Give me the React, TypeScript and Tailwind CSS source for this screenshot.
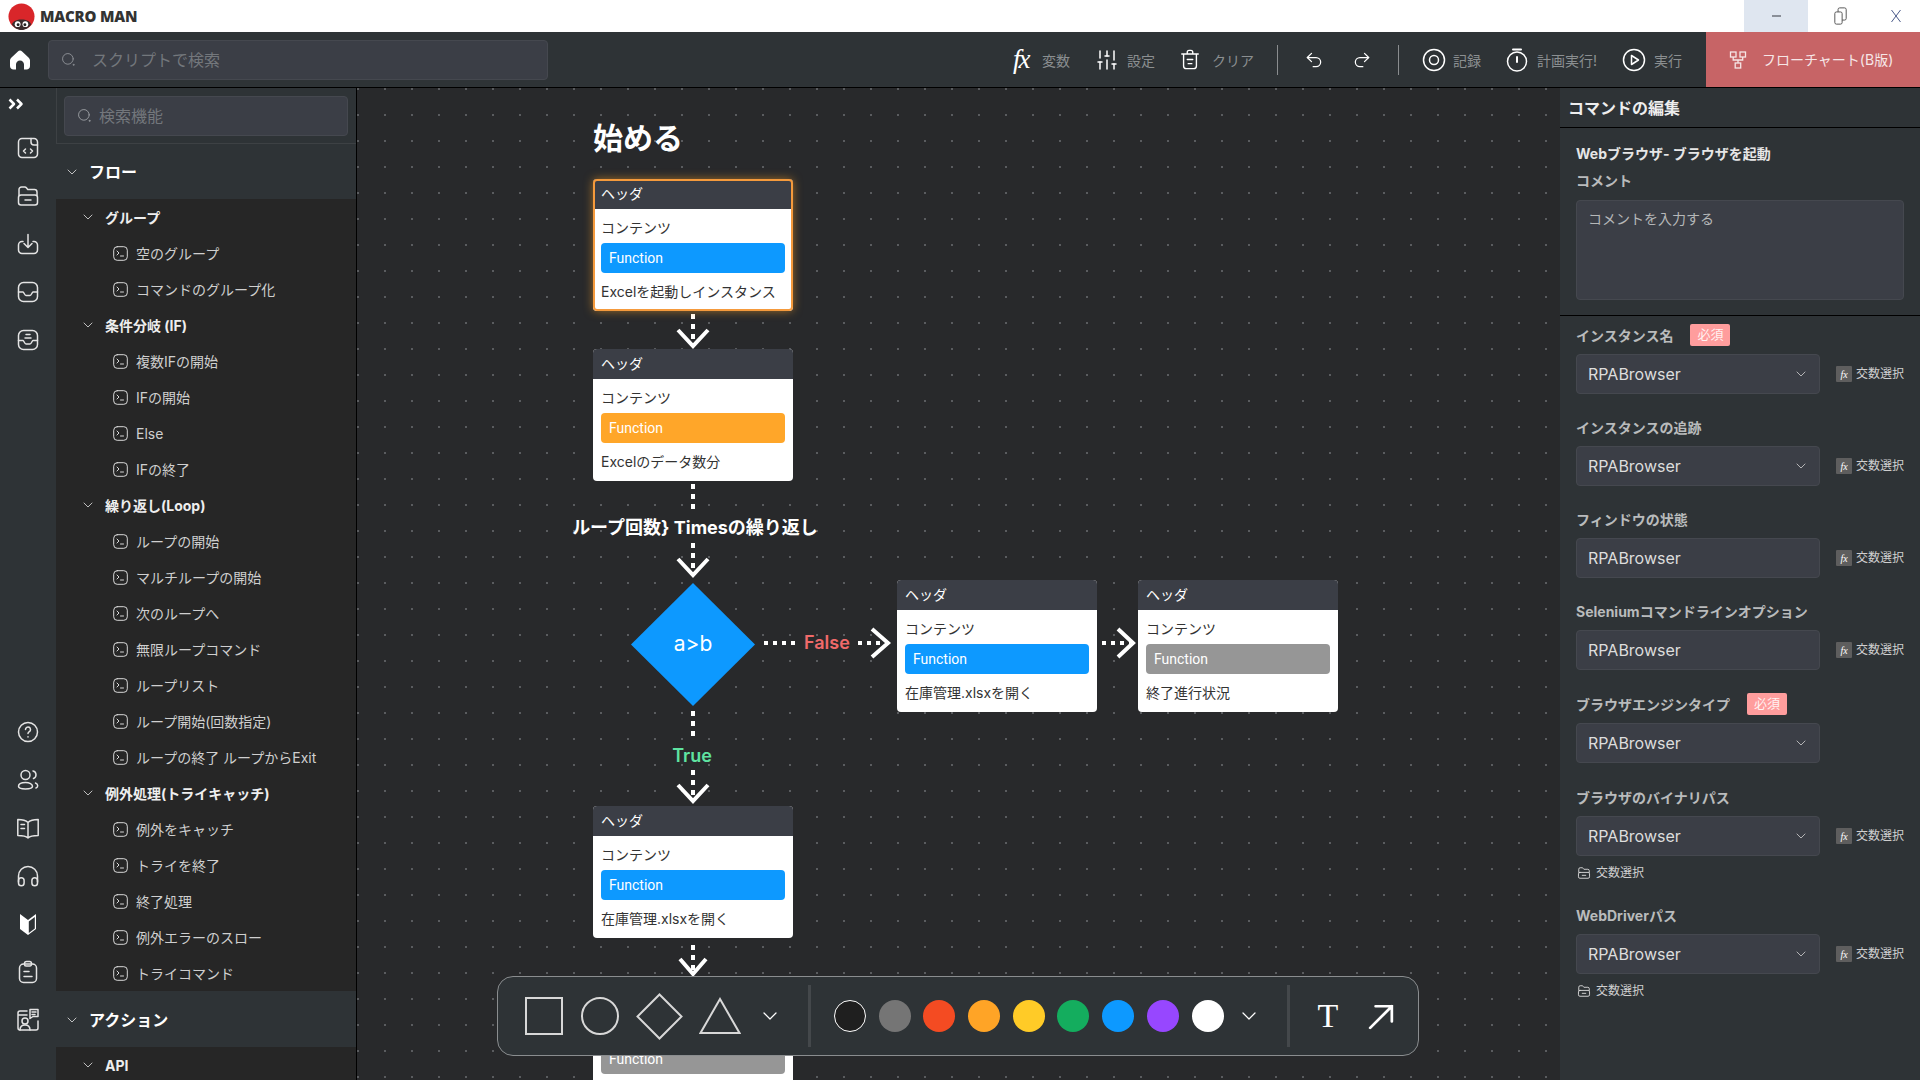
import * as React from "react";
import { ChevronDown, Redo2, SlidersVertical, Undo2 } from "lucide-react";

type IconProps = { className?: string };

function Svg({ className, children }: IconProps & { children: React.ReactNode }) {
  return (
    <svg viewBox="0 0 24 24" fill="none" stroke="currentColor" strokeWidth="1.5" strokeLinecap="round" strokeLinejoin="round" className={className}>
      {children}
    </svg>
  );
}

function SearchIcon({ className }: IconProps) {
  return (
    <Svg className={className}>
      <circle cx="11" cy="11" r="8.5" />
      <circle cx="20" cy="20.5" r="0.8" />
    </Svg>
  );
}

function TerminalIcon() {
  return (
    <svg viewBox="0 0 15 15" fill="none" stroke="currentColor" strokeWidth="1" strokeLinecap="round" strokeLinejoin="round" className="h-[15px] w-[15px] flex-none text-[#d8d8d8]">
      <rect x="0.7" y="0.7" width="13.6" height="13.6" rx="3.5" />
      <path d="M4 5l2 2-2 2M7.5 10h3" />
    </svg>
  );
}

function FolderIcon({ className }: IconProps) {
  return (
    <Svg className={className}>
      <path d="M3 11V5.5A2.5 2.5 0 0 1 5.5 3h3.2c.8 0 1.4.4 1.9 1l1.2 1.6h6.7A2.5 2.5 0 0 1 21 8v3" />
      <rect x="2.5" y="11" width="19" height="10" rx="2.5" />
      <path d="M9 16h6" />
    </Svg>
  );
}

const topIcons = {
  fileCode: (
    <Svg className="h-[24px] w-[24px]">
      <path d="M15 2.5H6A3.5 3.5 0 0 0 2.5 6v12A3.5 3.5 0 0 0 6 21.5h12a3.5 3.5 0 0 0 3.5-3.5V9" />
      <path d="M15 2.5V6a3 3 0 0 0 3 3h3.5M15 2.5h3A3.5 3.5 0 0 1 21.5 6v3" />
      <path d="M9.5 13l-2 2 2 2M14.5 13l2 2-2 2" />
    </Svg>
  ),
  download: (
    <Svg className="h-[24px] w-[24px]">
      <path d="M7 9.5H6A3.5 3.5 0 0 0 2.5 13v5A3.5 3.5 0 0 0 6 21.5h12a3.5 3.5 0 0 0 3.5-3.5v-5A3.5 3.5 0 0 0 18 9.5h-1" />
      <path d="M12 2.5V15M8 11.5l4 4 4-4" />
    </Svg>
  ),
  inbox: (
    <Svg className="h-[24px] w-[24px]">
      <rect x="2.5" y="2.5" width="19" height="19" rx="5" />
      <path d="M2.5 12H7c1 0 1.5 3.5 3 3.5h4c1.5 0 2-3.5 3-3.5h4.5" />
    </Svg>
  ),
  inbox2: (
    <Svg className="h-[24px] w-[24px]">
      <rect x="2.5" y="2.5" width="19" height="19" rx="5" />
      <path d="M2.5 12.5H7c1 0 1.5 3.5 3 3.5h4c1.5 0 2-3.5 3-3.5h4.5M10 6.5h4M9 10h6" />
    </Svg>
  ),
};

const bottomIcons = {
  help: (
    <Svg className="h-[24px] w-[24px]">
      <circle cx="12" cy="12" r="9.5" />
      <path d="M9.5 9.5a2.5 2.5 0 1 1 3.8 2.1c-.8.5-1.3 1-1.3 2" />
      <path d="M12 16.8v.1" />
    </Svg>
  ),
  users: (
    <Svg className="h-[24px] w-[24px]">
      <circle cx="9.5" cy="7" r="4.5" />
      <path d="M9.5 14.5c-4 0-7 1.5-7 3.8s3 2.7 7 2.7 7-.5 7-2.7-3-3.8-7-3.8z" />
      <path d="M17 3c2 .5 3 2 3 3.8S19 10 17.5 10.5M19.5 15c1.5.6 2.2 1.7 2.2 2.8s-.7 1.9-1.7 2.2" />
    </Svg>
  ),
  book: (
    <Svg className="h-[24px] w-[24px]">
      <path d="M12 6.5C10 4.5 6 3.5 1.8 3.5v16C6 19.5 10 20 12 22c2-2 6-2.5 10.2-2.5v-16C18 3.5 14 4.5 12 6.5zM12 6.5V22" />
      <path d="M5 8.5h3.5M5 12.5h3.5" />
    </Svg>
  ),
  headset: (
    <Svg className="h-[24px] w-[24px]">
      <path d="M2.5 18V12a9.5 9.5 0 0 1 19 0v6" />
      <path d="M2.5 16.5a2.8 2.8 0 0 1 5.6 0V19a2.8 2.8 0 0 1-5.6 0zM15.9 16.5a2.8 2.8 0 0 1 5.6 0V19a2.8 2.8 0 0 1-5.6 0z" />
    </Svg>
  ),
  clipboard: (
    <Svg className="h-[24px] w-[24px]">
      <rect x="3.5" y="4" width="17" height="18.5" rx="4" />
      <path d="M8.5 4.5V3.5a2 2 0 0 1 2-2h3a2 2 0 0 1 2 2v1a1.5 1.5 0 0 1-1.5 1.5h-4A1.5 1.5 0 0 1 8.5 4.5zM8 11.5h5M8 16.5h8" />
    </Svg>
  ),
  presentation: (
    <Svg className="h-[24px] w-[24px]">
      <path d="M11 3H4a2 2 0 0 0-2 2v15a2 2 0 0 0 2 2h16a2 2 0 0 0 2-2v-7M2 7h9" />
      <path d="M14 1.5h8v7h-5l-3 2z" />
      <circle cx="9" cy="13" r="3" />
      <path d="M4 22c0-3.5 2-5 5-5s5 1.5 5 5M16 4h4M16 6.5h3" />
    </Svg>
  ),
};

const flowGroups = [
  { title: "グループ", items: ["空のグループ", "コマンドのグループ化"] },
  { title: "条件分岐 (IF)", items: ["複数IFの開始", "IFの開始", "Else", "IFの終了"] },
  {
    title: "繰り返し(Loop)",
    items: ["ループの開始", "マルチループの開始", "次のループへ", "無限ループコマンド", "ループリスト", "ループ開始(回数指定)", "ループの終了 ループからExit"],
  },
  { title: "例外処理(トライキャッチ)", items: ["例外をキャッチ", "トライを終了", "終了処理", "例外エラーのスロー", "トライコマンド"] },
];

function SectionHeader({ title, className }: { title: string; className: string }) {
  return (
    <div className={"flex flex-none items-center bg-[#2e3336] pl-[8px] text-[16px] font-bold text-white " + className}>
      <ChevronDown className="h-[16px] w-[16px] text-[#dddddd]" strokeWidth={1.25} />
      <span className="ml-[9px]">{title}</span>
    </div>
  );
}

function GroupRow({ title }: { title: string }) {
  return (
    <div className="flex h-[36px] flex-none items-center pl-[24px] text-[14px] font-bold text-[#eeeeee]">
      <ChevronDown className="h-[16px] w-[16px] text-[#dddddd]" strokeWidth={1.25} />
      <span className="ml-[9px]">{title}</span>
    </div>
  );
}

function ItemRow({ label }: { label: string }) {
  return (
    <div className="flex h-[36px] flex-none items-center gap-[8px] pl-[57px] text-[14px] text-[#cfcfcf]">
      <TerminalIcon />
      <span className="whitespace-nowrap">{label}</span>
    </div>
  );
}

function FlowNode({ className, color, text, selected }: { className: string; color: string; text?: string; selected?: boolean }) {
  return (
    <div className={"absolute h-[132px] w-[200px] rounded-[4px] bg-white " + className + (selected ? " shadow-[0_0_10px_#ffa4268c]" : "")}>
      <div className="flex h-[30px] items-center rounded-t-[4px] bg-[#3b3e46] pb-[2px] pl-[8px] text-[14px] text-white">ヘッダ</div>
      <div className="px-[8px] pt-[9px] text-[14px] leading-[20px] text-[#333333]">
        <div>コンテンツ</div>
        <div className={"mt-[5px] flex h-[30px] items-center rounded-[4px] pl-[8px] font-['Roboto'] text-white " + color}>Function</div>
        {text && <div className="mt-[9px] whitespace-nowrap">{text}</div>}
      </div>
      {selected && <div className="pointer-events-none absolute inset-0 rounded-[4px] border-2 border-[#f59a3c]" />}
    </div>
  );
}

function Connectors() {
  const dash = { stroke: "#fff", strokeWidth: 4, strokeDasharray: "5 5", fill: "none" };
  const arrow = { stroke: "#fff", strokeWidth: 4, fill: "none" };
  return (
    <svg className="absolute left-0 top-0 h-[992px] w-[1203px]" viewBox="0 0 1203 992">
      <polygon points="336,495 398,556.5 336,618 274,556.5" fill="#0d99ff" />
      <path d="M336 226V256M336 396V425M336 455V485M336 623V653M336 682V712M336 857V885" {...dash} />
      <path d="M321 242L336 258L351 242M321 471L336 487L351 471M321 697L336 713L351 697M323 871L336 886L349 871" {...arrow} />
      <path d="M407 555H438M501 555H530M745 555H773" {...dash} strokeDasharray="4 5" />
      <path d="M515 541L531 555L515 569M761 541L776 555L761 569" {...arrow} />
    </svg>
  );
}

function ShapeBar() {
  const colors = ["bg-[#1f1f1f] border border-white", "bg-[#757575]", "bg-[#f44b22]", "bg-[#ffa426]", "bg-[#ffcb27]", "bg-[#14ad5e]", "bg-[#0d99ff]", "bg-[#9747ff]", "bg-white"];
  return (
    <div className="absolute left-[140px] top-[888px] flex h-[80px] w-[922px] items-center rounded-[16px] border border-[#8a8d8f] bg-[#2e3336] pl-[27px]">
      <div className="h-[38px] w-[38px] border-2 border-[#d8d8d8]" />
      <div className="ml-[18px] h-[38px] w-[38px] rounded-full border-2 border-[#d8d8d8]" />
      <svg viewBox="0 0 47 47" fill="none" stroke="#d8d8d8" strokeWidth="2" className="ml-[17px] h-[47px] w-[47px]">
        <path d="M23.5 1.5L45.5 23.5L23.5 45.5L1.5 23.5Z" />
      </svg>
      <svg viewBox="0 0 42 38" fill="none" stroke="#d8d8d8" strokeWidth="2" className="ml-[16px] h-[38px] w-[42px]">
        <path d="M21 2L40.5 36H1.5Z" />
      </svg>
      <ChevronDown className="ml-[17px] h-[24px] w-[24px] text-white" strokeWidth={1.25} />
      <div className="ml-[26px] h-[62px] w-[3px] bg-[#44484b]" />
      <div className="ml-[23px] flex gap-[12.7px]">
        {colors.map((c) => (
          <div key={c} className={"h-[32px] w-[32px] rounded-full " + c} />
        ))}
      </div>
      <ChevronDown className="ml-[13px] h-[24px] w-[24px] text-white" strokeWidth={1.25} />
      <div className="ml-[26px] h-[62px] w-[3px] bg-[#44484b]" />
      <span className="ml-[28px] font-['Liberation_Serif'] text-[34px] leading-none text-white">T</span>
      <svg viewBox="0 0 24 24" fill="none" stroke="#fff" strokeWidth="2.5" strokeLinecap="round" className="ml-[30px] h-[28px] w-[26px]">
        <path d="M2 23L22 3M7 3H22V17" />
      </svg>
    </div>
  );
}

function ToolLabel({ children }: { children: React.ReactNode }) {
  return <span className="whitespace-nowrap text-[14px] text-[#8b8f91]">{children}</span>;
}

function Field({
  label,
  required,
  select = true,
  pick = true,
  folder,
  className = "",
}: {
  label: string;
  required?: boolean;
  select?: boolean;
  pick?: boolean;
  folder?: boolean;
  className?: string;
}) {
  return (
    <div className={className}>
      <div className="flex h-[20px] items-center text-[14px] font-bold text-[#b9bbbc]">
        <span>{label}</span>
        {required && (
          <span className="ml-[17px] flex h-[22px] w-[40px] items-center justify-center rounded-[2px] bg-[#ff9d9d] text-[13px] font-normal text-[#fff2f2]">必須</span>
        )}
      </div>
      <div className="mt-[9px] flex items-center">
        <div className="flex h-[40px] w-[244px] items-center justify-between rounded-[4px] border border-[#45484f] bg-[#3b3e46] pb-[1px] pl-[11px] pr-[10px] text-[16px] text-[#dddddd]">
          <span>RPABrowser</span>
          {select && <ChevronDown className="h-[16px] w-[16px] text-[#cccccc]" strokeWidth={1.25} />}
        </div>
        {pick && (
          <div className="ml-[16px] flex items-center gap-[4px] whitespace-nowrap text-[12px] text-[#cfcfcf]">
            <span className="flex h-[16px] w-[16px] items-center justify-center rounded-[1px] bg-[#5e5e5e] font-['Liberation_Serif'] text-[10px] italic text-white">fx</span>
            <span>交数選択</span>
          </div>
        )}
      </div>
      {folder && (
        <div className="mt-[8px] flex h-[18px] items-center gap-[5px] text-[12px] text-[#cfcfcf]">
          <FolderIcon className="ml-[1px] h-[14px] w-[14px] text-[#e4e4e4]" />
          <span>交数選択</span>
        </div>
      )}
    </div>
  );
}

export default function App() {
  return (
    <div className="flex h-[1080px] w-[1920px] flex-col overflow-hidden bg-[#28292b] font-['Inter','Noto_Sans_CJK_JP',sans-serif]">
      {/* title bar */}
      <div className="flex h-[32px] flex-none items-center bg-white pl-[8px]">
        <svg viewBox="0 0 28 28" className="h-[27px] w-[27px]">
          <circle cx="14" cy="14" r="13.5" fill="#d9262a" />
          <path d="M4 22c1.5-3.5 5-5 10-5s8.5 1.5 10 5c-2 3.5-5.5 6-10 6s-8-2.5-10-6z" fill="#3a2c2c" />
          <circle cx="10" cy="22" r="3" fill="#fff" />
          <circle cx="18" cy="22" r="3" fill="#fff" />
          <circle cx="10.5" cy="22.5" r="1.5" fill="#222" />
          <circle cx="17.5" cy="22.5" r="1.5" fill="#222" />
        </svg>
        <span className="ml-[5px] font-['Open_Sans'] text-[15px] font-extrabold tracking-[-0.2px] text-[#333333]">MACRO MAN</span>
        <div className="ml-auto flex h-full text-[#555555]">
          <div className="flex w-[64px] items-center justify-center bg-[#dfe6f0]">
            <div className="h-[1.5px] w-[9px] bg-[#8a8f98]" />
          </div>
          <div className="flex w-[64px] items-center justify-center">
            <svg viewBox="0 0 16 22" fill="none" stroke="#555" strokeWidth="1.2" className="h-[18px] w-[13px]">
              <rect x="1" y="6" width="9" height="15" rx="2" />
              <path d="M5 6V3a2 2 0 0 1 2-2h6a2 2 0 0 1 2 2v11a2 2 0 0 1-2 2h-3" />
            </svg>
          </div>
          <div className="flex w-[48px] items-center justify-center">
            <svg viewBox="0 0 12 16" fill="none" stroke="#4a5a8a" strokeWidth="1" className="h-[16px] w-[12px]">
              <path d="M1.5 2L10.5 14M10.5 2L1.5 14" />
            </svg>
          </div>
        </div>
      </div>

      {/* top toolbar */}
      <div className="flex h-[56px] flex-none items-center border-b border-black bg-[#2e3336] pl-[10px] text-white">
        <svg viewBox="0 0 20 20" fill="#fff" className="h-[20px] w-[20px]">
          <path d="M10 0.5c.8 0 1.5.3 2.1.9l6.4 6c.9.8 1.5 1.9 1.5 3.1v5.5c0 2.2-1.5 3.5-3.5 3.5h-2.5v-5c0-2.2-1.7-4-4-4s-4 1.8-4 4v5H3.5C1.5 19.5 0 18.2 0 16v-5.5c0-1.2.5-2.3 1.5-3.1l6.4-6c.6-.6 1.3-.9 2.1-.9z" />
        </svg>
        <div className="ml-[18px] flex h-[40px] w-[500px] items-center rounded-[4px] border border-[#45484f] bg-[#3b3e46] pl-[12px] text-[16px] text-[#73777c]">
          <SearchIcon className="h-[15px] w-[15px] text-[#8e9196]" />
          <span className="ml-[16px]">スクリプトで検索</span>
        </div>

        <div className="ml-auto flex h-full items-center">
          <span className="w-[18px] font-['Liberation_Serif'] text-[27px] italic leading-none tracking-[-2px] text-white">fx</span>
          <span className="ml-[11px]"><ToolLabel>変数</ToolLabel></span>
          <SlidersVertical className="ml-[25px] h-[26px] w-[24px]" strokeWidth={1.5} />
          <span className="ml-[8px]"><ToolLabel>設定</ToolLabel></span>
          <Svg className="ml-[24px] h-[25px] w-[22px]">
            <path d="M3 6h18M9 5.5V4a2 2 0 0 1 2-2h2a2 2 0 0 1 2 2v1.5M5 6v13a3 3 0 0 0 3 3h8a3 3 0 0 0 3-3V6M9 12h6M10 16.5h4" />
          </Svg>
          <span className="ml-[11px]"><ToolLabel>クリア</ToolLabel></span>
          <div className="ml-[23px] h-[30px] w-px bg-[#8a8d8f]" />
          <Undo2 className="ml-[26px] h-[22px] w-[20px]" strokeWidth={1.5} />
          <Redo2 className="ml-[28px] h-[22px] w-[20px]" strokeWidth={1.5} />
          <div className="ml-[26px] h-[30px] w-px bg-[#8a8d8f]" />
          <Svg className="ml-[23px] h-[24px] w-[24px]">
            <circle cx="12" cy="12" r="10.5" />
            <circle cx="12" cy="12" r="4.5" />
          </Svg>
          <span className="ml-[7px]"><ToolLabel>記録</ToolLabel></span>
          <Svg className="ml-[24px] h-[24px] w-[24px]">
            <circle cx="12" cy="13.5" r="9.5" />
            <path d="M12 9v5M8 1.5h8" strokeWidth="2" />
          </Svg>
          <span className="ml-[8px]"><ToolLabel>計画実行!</ToolLabel></span>
          <Svg className="ml-[25px] h-[24px] w-[24px]">
            <circle cx="12" cy="12" r="10.5" />
            <path d="M9.5 7.5v9l7-4.5z" />
          </Svg>
          <span className="ml-[8px]"><ToolLabel>実行</ToolLabel></span>
        </div>
        <div className="ml-[24px] flex h-full w-[214px] flex-none items-center bg-[#c76466] pl-[23px] text-[14px] text-[#f6e6e6]">
          <svg viewBox="0 0 18 18" fill="none" stroke="currentColor" strokeWidth="1.3" className="h-[18px] w-[18px]">
            <rect x="1.5" y="1" width="5.5" height="5" />
            <rect x="11" y="1" width="5.5" height="5" />
            <rect x="6.2" y="12" width="5.5" height="5" />
            <path d="M4.2 6v3h9.5V6M9 9v3" />
          </svg>
          <span className="ml-[15px] whitespace-nowrap">フローチャート(B版)</span>
        </div>
      </div>

      <div className="flex min-h-0 flex-1">
        {/* icon rail */}
        <div className="flex w-[56px] flex-none flex-col items-center bg-[#2e3336] text-[#e4e4e4]">
          <svg viewBox="0 0 16 12" fill="none" stroke="#fff" strokeWidth="2.5" strokeLinejoin="round" className="mr-[25px] mt-[10px] h-[12px] w-[16px] flex-none">
            <path d="M1.5 1.5L6 6L1.5 10.5M9 1.5L13.5 6L9 10.5" />
          </svg>
          <div className="mt-[26px] flex flex-col items-center gap-[24px]">
            {topIcons.fileCode}
            <FolderIcon className="h-[24px] w-[24px]" />
            {topIcons.download}
            {topIcons.inbox}
            {topIcons.inbox2}
          </div>
          <div className="mt-auto mb-[48px] flex flex-col items-center gap-[24px]">
            {bottomIcons.help}
            {bottomIcons.users}
            {bottomIcons.book}
            {bottomIcons.headset}
            <svg viewBox="0 0 24 24" fill="#fff" className="h-[24px] w-[24px]">
              <path d="M4 2l8 6 8-6v15l-8 6-8-6z" />
              <path d="M12.8 9.5l6-4.5v11.5l-6 4.5z" fill="#2e3336" />
            </svg>
            {bottomIcons.clipboard}
            {bottomIcons.presentation}
          </div>
        </div>

        {/* function panel */}
        <div className="flex w-[301px] flex-none flex-col overflow-hidden border-r border-black bg-[#262626]">
          <div className="flex h-[56px] flex-none items-start border-b border-l border-[#3d4144] bg-[#2e3336] pl-[7px] pt-[8px]">
            <div className="flex h-[40px] w-[284px] items-center rounded-[4px] border border-[#45484f] bg-[#3b3e46] pb-[1px] pl-[12px] text-[16px] text-[#73777c]">
              <SearchIcon className="h-[15px] w-[15px] text-[#9a9da1]" />
              <span className="ml-[7px]">検索機能</span>
            </div>
          </div>
          <SectionHeader className="h-[55px] pt-[1px]" title="フロー" />
          {flowGroups.map((g) => (
            <React.Fragment key={g.title}>
              <GroupRow title={g.title} />
              {g.items.map((i) => (
                <ItemRow key={i} label={i} />
              ))}
            </React.Fragment>
          ))}
          <SectionHeader className="h-[56px] pt-[1px]" title="アクション" />
          <GroupRow title="API" />
        </div>

        {/* canvas */}
        <div className="relative flex-1 overflow-hidden bg-[#28292b] bg-[radial-gradient(circle_at_1px_1px,#5a5c5f_1px,transparent_1.3px)] bg-[size:27px_26px]">
          <div className="absolute left-[236px] top-[32px] text-[30px] font-bold leading-[36px] text-white">始める</div>
          <Connectors />
          <FlowNode className="left-[236px] top-[91px]" color="bg-[#0d99ff]" text="Excelを起動しインスタンス" selected />
          <FlowNode className="left-[236px] top-[261px]" color="bg-[#ffa629]" text="Excelのデータ数分" />
          <FlowNode className="left-[540px] top-[492px]" color="bg-[#0d99ff]" text="在庫管理.xlsxを開く" />
          <FlowNode className="left-[781px] top-[492px]" color="bg-[#969696]" text="終了進行状況" />
          <FlowNode className="left-[236px] top-[718px]" color="bg-[#0d99ff]" text="在庫管理.xlsxを開く" />
          <FlowNode className="left-[236px] top-[892px]" color="bg-[#969696]" />
          <div className="absolute left-[202px] top-[428px] w-[272px] text-center text-[18px] font-bold leading-[24px] text-white">{"ループ回数} Timesの繰り返し"}</div>
          <div className="absolute left-[447px] top-[543px] text-[18px] font-semibold leading-[24px] text-[#f06a6a]">False</div>
          <div className="absolute left-[308px] top-[656px] w-[54px] text-center text-[18px] font-semibold leading-[24px] text-[#5fe3a1]">True</div>
          <div className="absolute left-[296px] top-[543px] w-[80px] text-center text-[21px] font-normal leading-[26px] text-white">a&gt;b</div>
          <ShapeBar />
        </div>

        {/* right panel */}
        <div className="w-[360px] flex-none overflow-hidden bg-[#2e3336]">
          <div className="flex h-[40px] items-center border-b border-black pl-[8px] text-[16px] font-bold text-[#eeeeee]">コマンドの編集</div>
          <div className="h-[188px] border-b border-black px-[16px] pt-[16px] text-[14px] font-bold">
            <div className="h-[20px] leading-[20px] text-[#e6e6e6]">Webブラウザ- ブラウザを起動</div>
            <div className="mt-[7px] h-[20px] leading-[20px] text-[#b9bbbc]">コメント</div>
            <div className="mt-[9px] h-[100px] rounded-[4px] border border-[#45484f] bg-[#3b3e46] pl-[11px] pt-[7px] text-[14px] font-normal text-[#b5b7b8]">コメントを入力する</div>
          </div>
          <div className="px-[16px] pt-[9px]">
            <Field label="インスタンス名" required />
            <Field className="mt-[23px]" label="インスタンスの追跡" />
            <Field className="mt-[23px]" label="フィンドウの状態" select={false} />
            <Field className="mt-[23px]" label="Seleniumコマンドラインオプション" select={false} />
            <Field className="mt-[24px]" label="ブラウザエンジンタイプ" required pick={false} />
            <Field className="mt-[24px]" label="ブラウザのバイナリパス" folder />
            <Field className="mt-[23px]" label="WebDriverパス" folder />
          </div>
        </div>
      </div>
    </div>
  );
}
